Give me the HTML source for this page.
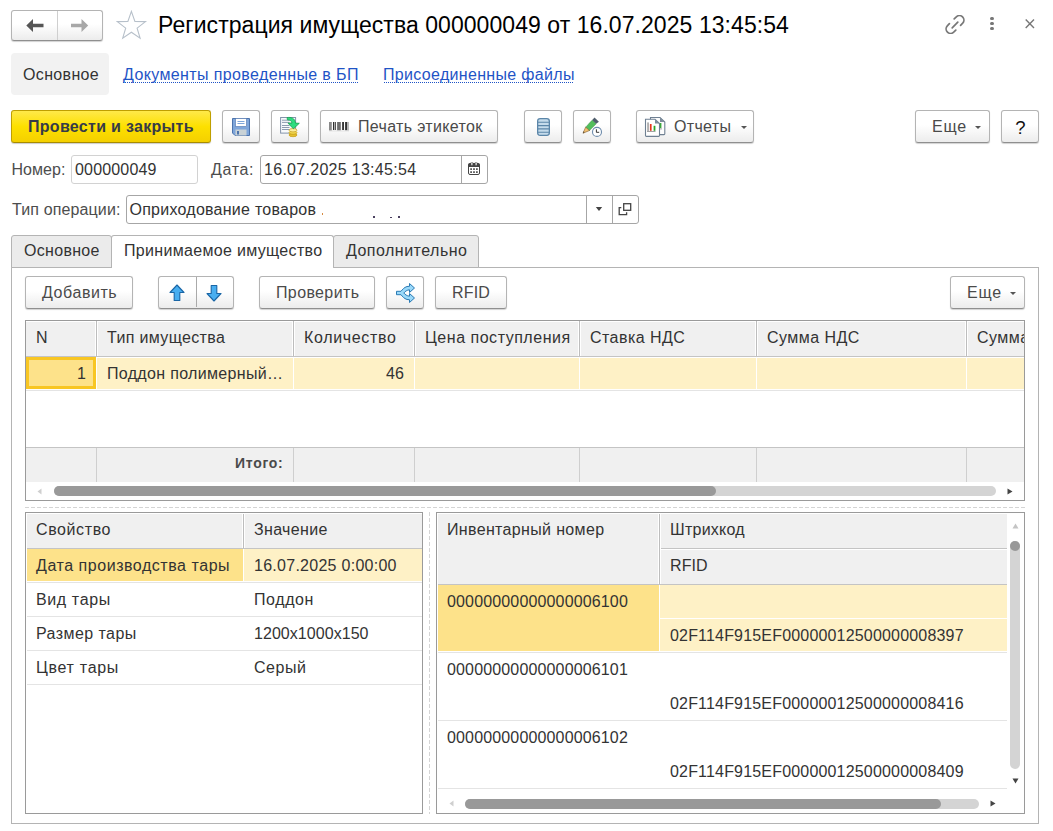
<!DOCTYPE html>
<html><head><meta charset="utf-8">
<style>
*{box-sizing:border-box;margin:0;padding:0}
html,body{width:1053px;height:831px;overflow:hidden;background:#fff}
body{position:relative;font-family:"Liberation Sans",sans-serif;font-size:16px;color:#333}
.a{position:absolute}
.t{position:absolute;white-space:nowrap;line-height:16px;letter-spacing:.2px}
.d{letter-spacing:.05px}
.btn{position:absolute;border:1px solid #b4b4b4;border-bottom-color:#8f8f8f;border-radius:3px;background:linear-gradient(#fff 0%,#fff 45%,#ececec 100%);box-shadow:0 1px 1px rgba(0,0,0,.18)}
.inp{position:absolute;border:1px solid #a6a6a6;border-radius:3px;background:#fff}
.hl{position:absolute;height:1px}
.vl{position:absolute;width:1px}
.lbl{color:#4d4d4d}
.bt{color:#4a4a4a}
.dd{position:absolute;width:0;height:0;border-left:3px solid transparent;border-right:3px solid transparent;border-top:3px solid #555}
</style></head><body>

<!-- nav buttons -->
<div class="btn" style="left:11px;top:10px;width:92px;height:31px"></div>
<div class="vl" style="left:57px;top:11px;height:29px;background:#cfcfcf"></div>
<svg class="a" style="left:25.5px;top:19px" width="18" height="13" viewBox="0 0 18 13"><path d="M0.3 6.5 L7 0 L7 4.8 L17.5 4.8 L17.5 8.2 L7 8.2 L7 13 Z" fill="#555"/></svg>
<svg class="a" style="left:71px;top:19px" width="18" height="13" viewBox="0 0 18 13"><path d="M17.2 6.5 L10.5 0 L10.5 4.8 L0 4.8 L0 8.2 L10.5 8.2 L10.5 13 Z" fill="#a8a8a8"/></svg>
<!-- star -->
<svg class="a" style="left:116px;top:10px" width="32" height="30" viewBox="116 10 32 30"><path d="M131.4 11.4 L134.9 21.4 L145.5 21.6 L137.1 28.1 L140.1 38.2 L131.4 32.2 L122.7 38.2 L125.7 28.1 L117.3 21.6 L127.9 21.4 Z" fill="none" stroke="#b7c0ca" stroke-width="1.1" stroke-linejoin="miter"/></svg>
<div class="t" style="left:158px;top:14px;font-size:23px;line-height:23px;color:#000;letter-spacing:.06px">Регистрация имущества 000000049 от 16.07.2025 13:45:54</div>
<!-- top right icons -->
<svg class="a" style="left:945px;top:14.5px" width="20" height="19" viewBox="0 0 20 19"><g fill="none" stroke="#777" stroke-width="1.7" stroke-linecap="round"><path d="M4.4 8.7 L2.32 10.82 A4.5 4.5 0 0 0 8.68 17.18 L10.8 15.1"/><path d="M9.2 3.9 L11.32 1.82 A4.5 4.5 0 0 1 17.68 8.18 L15.6 10.3"/><path d="M7.2 12.8 L12.8 7.2"/></g></svg>
<div class="a" style="left:990.2px;top:16.8px;width:3.6px;height:3.6px;border-radius:50%;background:#777"></div>
<div class="a" style="left:990.2px;top:21.6px;width:3.6px;height:3.6px;border-radius:50%;background:#777"></div>
<div class="a" style="left:990.2px;top:26.5px;width:3.6px;height:3.6px;border-radius:50%;background:#777"></div>
<svg class="a" style="left:1024px;top:18px" width="12" height="12" viewBox="0 0 12 12"><path d="M1.7 1.6 L10 10 M10 1.6 L1.7 10" stroke="#777" stroke-width="1.4"/></svg>

<!-- page tabs -->
<div class="a" style="left:11px;top:53px;width:98px;height:42px;background:#f2f2f2;border-radius:4px"></div>
<div class="t" style="left:23px;top:67px;color:#333;letter-spacing:.34px">Основное</div>
<div class="t" style="left:123px;top:67px;color:#1f54c6;letter-spacing:.38px">Документы проведенные в БП</div>
<div class="a" style="left:123px;top:82px;width:235px;height:1px;background-image:linear-gradient(90deg,#1f54c6 50%,transparent 50%);background-size:2px 1px"></div>
<div class="t" style="left:383px;top:67px;color:#1f54c6;letter-spacing:.32px">Присоединенные файлы</div>
<div class="a" style="left:384px;top:82px;width:189px;height:1px;background-image:linear-gradient(90deg,#1f54c6 50%,transparent 50%);background-size:2px 1px"></div>

<!-- toolbar -->
<div class="a" style="left:11px;top:110px;width:200px;height:33px;border:1px solid #bf9f00;border-bottom-color:#a88c00;border-radius:3px;background:linear-gradient(#ffe94a,#fde000 50%,#f4d000);box-shadow:0 1px 1px rgba(0,0,0,.2)"></div>
<div class="t" style="left:28px;top:119px;font-weight:bold;color:#363b48;letter-spacing:.3px">Провести и закрыть</div>

<div class="btn" style="left:222px;top:110px;width:38px;height:33px"></div>
<svg class="a" style="left:232px;top:118px" width="18" height="18" viewBox="0 0 18 18">
<path d="M0.5 0.5 H17.5 V17.5 H3 L0.5 15 Z" fill="#7fa6da" stroke="#4d74ad"/>
<rect x="3.5" y="0.5" width="11" height="8" fill="#fff" stroke="#4d74ad" stroke-width=".6"/>
<path d="M5.5 3.5 H12.5 M5.5 5.5 H12.5" stroke="#7fa6da" stroke-width="1"/>
<rect x="3.5" y="11.5" width="11" height="6" fill="#c9d2d6"/>
<rect x="5" y="13" width="2" height="3.5" fill="#4d74ad"/>
</svg>

<div class="btn" style="left:271px;top:110px;width:38px;height:33px"></div>
<svg class="a" style="left:279px;top:116px" width="22" height="22" viewBox="0 0 22 22">
<rect x="1.6" y="1.5" width="15" height="15.6" fill="#f8fafc" stroke="#8393aa" stroke-width="1"/>
<path d="M3 4.2 H10.5 M3 6.4 H10.5 M3 9.5 H10.5 M3 11.5 H10.5 M3 13.5 H10.5" stroke="#8d9bb0" stroke-width="1"/>
<ellipse cx="14" cy="19" rx="4" ry="1.7" fill="#e6c22e" stroke="#c49a14" stroke-width=".7"/>
<ellipse cx="14" cy="16.6" rx="4" ry="1.7" fill="#f0d650" stroke="#c49a14" stroke-width=".7"/>
<ellipse cx="14" cy="14.2" rx="4" ry="1.7" fill="#fbeea0" stroke="#c8a020" stroke-width=".7"/>
<path d="M8.1 1.6 C12 1 15.8 1.8 16.5 7.1 L20.3 7.3 L14.4 12.8 L9 7.1 L13 7 C12.8 5 11 4 8.4 3.8 Z" fill="#2edc7e" stroke="#16a04e" stroke-width=".8" stroke-linejoin="round"/>
</svg>

<div class="btn" style="left:320px;top:110px;width:178px;height:33px"></div>
<svg class="a" style="left:329px;top:122px" width="20" height="10" viewBox="0 0 20 10">
<rect x="0" y="0" width="2.8" height="8.6" fill="#8a8a8a"/>
<rect x="4" y="0" width="1" height="8" fill="#333"/>
<rect x="5" y="0" width=".8" height="8" fill="#bbb"/>
<rect x="5.8" y="0" width="1.1" height="8" fill="#444"/>
<rect x="8.1" y="0" width="3.7" height="8.4" fill="#6e6e6e"/>
<rect x="13.2" y="0" width="1.7" height="8" fill="#222"/>
<rect x="16.1" y="0" width="2" height="8.3" fill="#333"/>
<rect x="18.2" y="0" width="1.6" height="8.6" fill="#aaa"/>
<rect x="0" y="8.6" width="20" height=".8" fill="#ddd"/>
</svg>
<div class="t bt" style="left:358px;top:119px;letter-spacing:.33px">Печать этикеток</div>

<div class="btn" style="left:524px;top:110px;width:38px;height:33px"></div>
<svg class="a" style="left:537px;top:118px" width="13" height="18" viewBox="0 0 13 18">
<rect x=".65" y=".65" width="11.7" height="16.7" rx="2.5" fill="#c5dbeb" stroke="#5b86a9" stroke-width="1.3"/>
<path d="M1 4.3 H12 M1 7.6 H12 M1 10.9 H12 M1 14.2 H12" stroke="#5b86a9" stroke-width="1.1"/>
</svg>

<div class="btn" style="left:573px;top:110px;width:38px;height:33px"></div>
<svg class="a" style="left:582px;top:116px" width="22" height="22" viewBox="0 0 22 22">
<path d="M7.5 14.5 L14.2 7.8 L10.2 4.1 L3.6 11.2 Z" fill="#52be5c" stroke="#2a7a32" stroke-width=".6" stroke-dasharray="1 .6"/>
<path d="M14.2 7.8 L16.9 5.8 L12.5 1.4 L10.2 4.1 Z" fill="#4f5d6c"/>
<path d="M1.06 17.2 L7.5 14.5 L3.6 11.2 Z" fill="#f3c070" stroke="#7a5a30" stroke-width=".6"/>
<path d="M.9 17.5 L2.4 16.6 L1.7 15 Z" fill="#5a4a30"/>
<circle cx="15" cy="15.9" r="4.5" fill="#fff" stroke="#6d8bab" stroke-width="1.1"/>
<path d="M14.4 13.3 V16.3 H17.2" fill="none" stroke="#2a2a2a" stroke-width=".95"/>
</svg>

<div class="btn" style="left:636px;top:110px;width:118px;height:33px"></div>
<svg class="a" style="left:644px;top:116px" width="22" height="22" viewBox="0 0 22 22">
<path d="M6.5 1.5 H16 L20.8 6 V17.8 Q20.8 18.6 20 18.6 H7.3 Q6.5 18.6 6.5 17.8 Z" fill="#fdfdfd" stroke="#6f8092" stroke-width="1.1"/>
<path d="M16 1.5 L20.8 6 H16 Z" fill="#7d8c9b"/>
<rect x="15" y="7" width="2.4" height="5.2" fill="#3aa83a"/>
<rect x="15.2" y="12.2" width="2.8" height="1.3" fill="#bbb"/>
<path d="M1.5 3.3 H11 L15.5 7.5 V19.6 Q15.5 20.4 14.7 20.4 H2.3 Q1.5 20.4 1.5 19.6 Z" fill="#fff" stroke="#6f8092" stroke-width="1.1"/>
<path d="M11 3.3 L15.5 7.5 H11 Z" fill="#7d8c9b"/>
<rect x="3.2" y="6.4" width="1.7" height="9.1" fill="#a8a8a8"/>
<rect x="5.9" y="8" width="1.7" height="6.8" fill="#e8341c"/>
<rect x="9.6" y="9.8" width="1.8" height="5" fill="#2aa52a"/>
<rect x="3" y="15.1" width="8.5" height=".9" fill="#999"/>
</svg>
<div class="t bt" style="left:674px;top:119px;letter-spacing:.33px">Отчеты</div>
<div class="dd" style="left:740.5px;top:126px"></div>

<div class="btn" style="left:915px;top:110px;width:75px;height:33px"></div>
<div class="t bt" style="left:932px;top:119px;letter-spacing:.75px">Еще</div>
<div class="dd" style="left:975px;top:126px"></div>
<div class="btn" style="left:1001px;top:110px;width:38px;height:33px"></div>
<div class="t" style="left:1015.3px;top:119px;color:#111;font-size:18.5px;line-height:18px">?</div>

<!-- fields -->
<div class="t lbl" style="left:11.5px;top:162px;letter-spacing:.05px">Номер:</div>
<div class="inp" style="left:71px;top:155px;width:127px;height:29px;border-color:#d2d2d2"></div>
<div class="t d" style="left:75px;top:162px;letter-spacing:.17px">000000049</div>
<div class="t lbl" style="left:211px;top:162px;letter-spacing:.65px">Дата:</div>
<div class="inp" style="left:260px;top:155px;width:228px;height:29px"></div>
<div class="vl" style="left:461px;top:156px;height:27px;background:#a6a6a6"></div>
<div class="t d" style="left:264px;top:162px;letter-spacing:.29px">16.07.2025 13:45:54</div>
<svg class="a" style="left:468px;top:162px" width="12" height="13" viewBox="0 0 12 13">
<rect x="0.5" y="1.5" width="11" height="11" rx="1.5" fill="#fff" stroke="#444" stroke-width="1"/>
<rect x="0.5" y="1.5" width="11" height="3.5" fill="#444"/>
<rect x="3" y="0" width="1.8" height="3.5" rx=".9" fill="#fff" stroke="#444" stroke-width=".6"/>
<rect x="7.2" y="0" width="1.8" height="3.5" rx=".9" fill="#fff" stroke="#444" stroke-width=".6"/>
<g fill="#333"><rect x="2.3" y="6.3" width="1.6" height="1.6"/><rect x="5.2" y="6.3" width="1.6" height="1.6"/><rect x="8.1" y="6.3" width="1.6" height="1.6"/><rect x="2.3" y="9.3" width="1.6" height="1.6"/><rect x="5.2" y="9.3" width="1.6" height="1.6"/><rect x="8.1" y="9.3" width="1.6" height="1.6"/></g>
</svg>
<div class="t lbl" style="left:12px;top:202px;letter-spacing:.13px">Тип операции:</div>
<div class="inp" style="left:126px;top:195px;width:513px;height:29px"></div>
<div class="vl" style="left:586px;top:196px;height:27px;background:#a6a6a6"></div>
<div class="vl" style="left:612px;top:196px;height:27px;background:#a6a6a6"></div>
<div class="t" style="left:129.5px;top:202px;letter-spacing:.25px">Оприходование товаров</div>
<div class="a" style="left:321.8px;top:212.7px;width:1.3px;height:2px;background:#d68a40"></div>
<div class="a" style="left:373px;top:216px;width:1.7px;height:1.8px;background:#4a4060"></div>
<div class="a" style="left:390px;top:216.5px;width:1.7px;height:1.3px;background:#4a4060"></div>
<div class="a" style="left:398px;top:216px;width:1.7px;height:1.8px;background:#4a4060"></div>
<svg class="a" style="left:595px;top:207px" width="8" height="4" viewBox="0 0 8 4"><path d="M0.8 0 L7.2 0 L4 4 Z" fill="#444"/></svg>
<svg class="a" style="left:618px;top:202px" width="14" height="14" viewBox="0 0 14 14"><g fill="none" stroke="#444" stroke-width="1.3"><rect x="5.7" y="1.7" width="7" height="6.6"/><path d="M3.3 5.6 H1.2 V12.6 H8.6 V10.2"/></g></svg>

<!-- tabs -->
<div class="a" style="left:11px;top:267px;width:1028px;height:557px;border:1px solid #b4b4b4;border-top:none"></div>
<div class="hl" style="left:478px;top:267px;width:561px;background:#b4b4b4"></div>
<div class="a" style="left:11px;top:235px;width:101px;height:33px;border:1px solid #b4b4b4;background:#ebebeb;border-radius:3px 3px 0 0"></div>
<div class="t" style="left:24px;top:243px;letter-spacing:.3px">Основное</div>
<div class="a" style="left:111px;top:235px;width:223px;height:33px;border:1px solid #b4b4b4;border-bottom:none;background:#fff;border-radius:3px 3px 0 0"></div>
<div class="t" style="left:124px;top:243px;letter-spacing:.32px">Принимаемое имущество</div>
<div class="a" style="left:333px;top:235px;width:146px;height:33px;border:1px solid #b4b4b4;background:#ebebeb;border-radius:3px 3px 0 0"></div>
<div class="t" style="left:346px;top:243px;letter-spacing:.48px">Дополнительно</div>

<!-- inner toolbar -->
<div class="btn" style="left:25px;top:276px;width:108px;height:33px"></div>
<div class="t bt" style="left:42px;top:285px;letter-spacing:.57px">Добавить</div>
<div class="btn" style="left:158px;top:276px;width:76px;height:33px"></div>
<div class="vl" style="left:196px;top:277px;height:30px;background:#aaa"></div>
<svg class="a" style="left:169px;top:284px" width="16" height="18" viewBox="0 0 16 18"><path d="M8 1 L15 8.5 H10.8 V16.5 H5.2 V8.5 H1 Z" fill="#48aef0" stroke="#1a66a6" stroke-width="1.1" stroke-linejoin="round"/></svg>
<svg class="a" style="left:206px;top:284px" width="16" height="18" viewBox="0 0 16 18"><path d="M8 17 L15 9.5 H10.8 V1.5 H5.2 V9.5 H1 Z" fill="#48aef0" stroke="#1a66a6" stroke-width="1.1" stroke-linejoin="round"/></svg>
<div class="btn" style="left:259px;top:276px;width:116px;height:33px"></div>
<div class="t bt" style="left:276px;top:285px;letter-spacing:.37px">Проверить</div>
<div class="btn" style="left:386px;top:276px;width:38px;height:33px"></div>
<svg class="a" style="left:395px;top:282px" width="21" height="22" viewBox="0 0 21 22"><path d="M1.5 9.3 H6 C7.5 7.5 9 5.5 12 4.5 L14.5 4.3 V1.5 L19.5 6 L14.5 10.5 V7.8 C12 8 10 9.5 8.8 11 C10 12.5 12 14 14.5 14.2 V11.5 L19.5 16 L14.5 20.5 V17.7 L12 17.5 C9 16.5 7.5 14.5 6 12.7 H1.5 Z" fill="#9ad9fa" stroke="#2a7ab4" stroke-width="1" stroke-linejoin="round"/></svg>
<div class="btn" style="left:435px;top:276px;width:72px;height:33px"></div>
<div class="t bt" style="left:452px;top:285px">RFID</div>
<div class="btn" style="left:950px;top:276px;width:75px;height:33px"></div>
<div class="t bt" style="left:967px;top:285px;letter-spacing:.75px">Еще</div>
<div class="dd" style="left:1010px;top:292px"></div>

<!-- main table -->
<div class="a" style="left:25px;top:320px;width:1000px;height:181px;border:1px solid #9a9a9a;background:#fff"></div>
<div class="a" style="left:26px;top:322px;width:998px;height:34px;background:#f0f0f0"></div>
<div class="hl" style="left:26px;top:356px;width:998px;background:#c4c4c4"></div>
<div class="a" style="left:26px;top:358px;width:998px;height:31px;background:#fef1c6"></div>
<div class="hl" style="left:26px;top:390px;width:998px;background:#e4e4e4"></div>
<div class="a" style="left:26px;top:357px;width:70px;height:32px;background:#fde28a;border:3px solid #f8c623"></div>
<div class="a" style="left:26px;top:447px;width:998px;height:35px;background:#f0f0f0;border-top:1px solid #c4c4c4"></div>
<!-- col lines header -->
<div class="vl" style="left:96px;top:321px;height:35px;background:#bdbdbd;box-shadow:-1px 0 0 #fff,1px 0 0 #fff"></div>
<div class="vl" style="left:293px;top:321px;height:35px;background:#bdbdbd;box-shadow:-1px 0 0 #fff,1px 0 0 #fff"></div>
<div class="vl" style="left:414px;top:321px;height:35px;background:#bdbdbd;box-shadow:-1px 0 0 #fff,1px 0 0 #fff"></div>
<div class="vl" style="left:579px;top:321px;height:35px;background:#bdbdbd;box-shadow:-1px 0 0 #fff,1px 0 0 #fff"></div>
<div class="vl" style="left:756px;top:321px;height:35px;background:#bdbdbd;box-shadow:-1px 0 0 #fff,1px 0 0 #fff"></div>
<div class="vl" style="left:966px;top:321px;height:35px;background:#bdbdbd;box-shadow:-1px 0 0 #fff,1px 0 0 #fff"></div>
<div class="vl" style="left:96px;top:358px;height:31px;background:#fff"></div>
<div class="vl" style="left:293px;top:358px;height:31px;background:#fff"></div>
<div class="vl" style="left:414px;top:358px;height:31px;background:#fff"></div>
<div class="vl" style="left:579px;top:358px;height:31px;background:#fff"></div>
<div class="vl" style="left:756px;top:358px;height:31px;background:#fff"></div>
<div class="vl" style="left:966px;top:358px;height:31px;background:#fff"></div>
<div class="vl" style="left:96px;top:448px;height:34px;background:#cfcfcf"></div>
<div class="vl" style="left:293px;top:448px;height:34px;background:#cfcfcf"></div>
<div class="vl" style="left:414px;top:448px;height:34px;background:#cfcfcf"></div>
<div class="vl" style="left:579px;top:448px;height:34px;background:#cfcfcf"></div>
<div class="vl" style="left:756px;top:448px;height:34px;background:#cfcfcf"></div>
<div class="vl" style="left:966px;top:448px;height:34px;background:#cfcfcf"></div>
<div class="t" style="left:36px;top:330px">N</div>
<div class="t" style="left:107px;top:330px;letter-spacing:.35px">Тип имущества</div>
<div class="t" style="left:304px;top:330px;letter-spacing:.66px">Количество</div>
<div class="t" style="left:425px;top:330px;letter-spacing:.52px">Цена поступления</div>
<div class="t" style="left:590px;top:330px;letter-spacing:.45px">Ставка НДС</div>
<div class="t" style="left:767px;top:330px;letter-spacing:.47px">Сумма НДС</div>
<div class="t" style="left:977px;top:330px;width:47px;overflow:hidden;letter-spacing:.45px">Сумма</div>
<div class="t d" style="left:77px;top:366px">1</div>
<div class="t" style="left:107px;top:366px;letter-spacing:.33px">Поддон полимерный…</div>
<div class="t d" style="left:386px;top:366px">46</div>
<div class="t" style="left:235px;top:455px;font-size:14px;font-weight:bold;color:#4a4a4a;letter-spacing:.7px">Итого:</div>
<!-- scrollbar -->
<svg class="a" style="left:37px;top:488px" width="5" height="7" viewBox="0 0 5 7"><path d="M4.5 0.5 L0.5 3.5 L4.5 6.5 Z" fill="#cfcfcf"/></svg>
<div class="a" style="left:54px;top:486px;width:942px;height:10px;border-radius:5px;background:#d4d4d4"></div>
<div class="a" style="left:54px;top:486px;width:662px;height:10px;border-radius:5px;background:#999"></div>
<svg class="a" style="left:1007px;top:488px" width="6" height="7" viewBox="0 0 6 7"><path d="M0.5 0.5 L5.5 3.5 L0.5 6.5 Z" fill="#444"/></svg>

<!-- dashed separator -->
<div class="a" style="left:25px;top:507px;width:1000px;height:1px;background-image:linear-gradient(90deg,#d4d4d4 4px,transparent 4px);background-size:6px 1px"></div>
<div class="a" style="left:429px;top:512px;width:1px;height:302px;background-image:linear-gradient(180deg,#d4d4d4 4px,transparent 4px);background-size:1px 6px"></div>

<!-- bottom left table -->
<div class="a" style="left:25px;top:512px;width:398px;height:302px;border:1px solid #9a9a9a;background:#fff"></div>
<div class="a" style="left:27px;top:514px;width:395px;height:34px;background:#f0f0f0"></div>
<div class="vl" style="left:243px;top:514px;height:34px;background:#bdbdbd;box-shadow:-1px 0 0 #fff,1px 0 0 #fff"></div>
<div class="hl" style="left:27px;top:548px;width:395px;background:#c4c4c4"></div>
<div class="a" style="left:27px;top:549px;width:216px;height:32px;background:#fde28a"></div>
<div class="a" style="left:244px;top:549px;width:178px;height:32px;background:#fef1c6"></div>
<div class="hl" style="left:27px;top:582px;width:395px;background:#e4e4e4"></div>
<div class="hl" style="left:27px;top:616px;width:395px;background:#e4e4e4"></div>
<div class="hl" style="left:27px;top:650px;width:395px;background:#e4e4e4"></div>
<div class="hl" style="left:27px;top:684px;width:395px;background:#e4e4e4"></div>
<div class="t" style="left:36px;top:522px;letter-spacing:.6px">Свойство</div>
<div class="t" style="left:254px;top:522px;letter-spacing:.35px">Значение</div>
<div class="t" style="left:36px;top:558px;letter-spacing:.54px">Дата производства тары</div>
<div class="t d" style="left:254px;top:558px;letter-spacing:.27px">16.07.2025 0:00:00</div>
<div class="t" style="left:36px;top:592px;letter-spacing:.62px">Вид тары</div>
<div class="t" style="left:254px;top:592px;letter-spacing:.6px">Поддон</div>
<div class="t" style="left:36px;top:626px;letter-spacing:.44px">Размер тары</div>
<div class="t d" style="left:254px;top:626px">1200x1000x150</div>
<div class="t" style="left:36px;top:660px;letter-spacing:.7px">Цвет тары</div>
<div class="t" style="left:254px;top:660px;letter-spacing:.56px">Серый</div>

<!-- bottom right table -->
<div class="a" style="left:436px;top:512px;width:589px;height:302px;border:1px solid #9a9a9a;background:#fff"></div>
<div class="a" style="left:438px;top:514px;width:569px;height:70px;background:#f0f0f0"></div>
<div class="vl" style="left:659px;top:514px;height:70px;background:#bdbdbd;box-shadow:-1px 0 0 #fff,1px 0 0 #fff"></div>
<div class="hl" style="left:661px;top:548px;width:346px;background:#c4c4c4;box-shadow:0 1px 0 #fff"></div>
<div class="hl" style="left:438px;top:584px;width:569px;background:#c4c4c4"></div>
<div class="a" style="left:438px;top:585px;width:221px;height:66px;background:#fde28a"></div>
<div class="a" style="left:660px;top:585px;width:347px;height:66px;background:#fef1c6"></div>
<div class="hl" style="left:660px;top:618px;width:347px;background:#fff"></div>
<div class="hl" style="left:438px;top:652px;width:569px;background:#e4e4e4"></div>
<div class="hl" style="left:438px;top:720px;width:569px;background:#e4e4e4"></div>
<div class="hl" style="left:438px;top:788px;width:569px;background:#e4e4e4"></div>
<div class="t" style="left:447px;top:522px;letter-spacing:.34px">Инвентарный номер</div>
<div class="t" style="left:670px;top:522px;letter-spacing:.25px">Штрихкод</div>
<div class="t" style="left:670px;top:558px;letter-spacing:.1px">RFID</div>
<div class="t d" style="left:447px;top:594px;letter-spacing:.15px">00000000000000006100</div>
<div class="t d" style="left:670px;top:628px;letter-spacing:.18px">02F114F915EF00000012500000008397</div>
<div class="t d" style="left:447px;top:662px;letter-spacing:.15px">00000000000000006101</div>
<div class="t d" style="left:670px;top:696px;letter-spacing:.18px">02F114F915EF00000012500000008416</div>
<div class="t d" style="left:447px;top:730px;letter-spacing:.15px">00000000000000006102</div>
<div class="t d" style="left:670px;top:764px;letter-spacing:.18px">02F114F915EF00000012500000008409</div>
<!-- vertical scrollbar -->
<svg class="a" style="left:1012px;top:523px" width="7" height="6" viewBox="0 0 7 6"><path d="M0.5 5.5 L3.5 0.5 L6.5 5.5 Z" fill="#c4c4c4"/></svg>
<div class="a" style="left:1010px;top:541px;width:10px;height:228px;border-radius:5px;background:#d4d4d4"></div>
<div class="a" style="left:1010px;top:541px;width:10px;height:10px;border-radius:5px;background:#999"></div>
<svg class="a" style="left:1012px;top:778px" width="7" height="6" viewBox="0 0 7 6"><path d="M0.5 0.5 L3.5 5.5 L6.5 0.5 Z" fill="#444"/></svg>
<!-- horizontal scrollbar -->
<svg class="a" style="left:449px;top:800px" width="5" height="7" viewBox="0 0 5 7"><path d="M4.5 0.5 L0.5 3.5 L4.5 6.5 Z" fill="#cfcfcf"/></svg>
<div class="a" style="left:465px;top:799px;width:514px;height:10px;border-radius:5px;background:#d4d4d4"></div>
<div class="a" style="left:465px;top:799px;width:476px;height:10px;border-radius:5px;background:#999"></div>
<svg class="a" style="left:990px;top:800px" width="6" height="7" viewBox="0 0 6 7"><path d="M0.5 0.5 L5.5 3.5 L0.5 6.5 Z" fill="#444"/></svg>

</body></html>
